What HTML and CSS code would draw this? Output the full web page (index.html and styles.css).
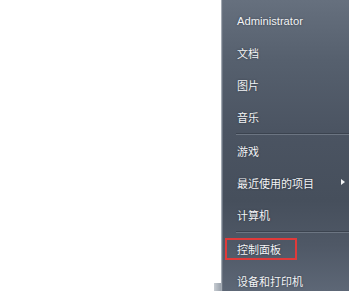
FILE: index.html
```html
<!DOCTYPE html>
<html lang="zh-CN">
<head>
<meta charset="utf-8">
<title>开始菜单</title>
<link rel="stylesheet" href="styles.css">
</head>
<body>
<div class="screen">
  <div class="desk">
    <div class="corner"></div>
  </div>
  <div class="menu">
    <div class="group first">
      <div class="item latin">Administrator</div>
      <div class="item">文档</div>
      <div class="item">图片</div>
      <div class="item">音乐</div>
    </div>
    <div class="sep"></div>
    <div class="group">
      <div class="item">游戏</div>
      <div class="item has-sub"><span>最近使用的项目</span><span class="arrow"></span></div>
      <div class="item">计算机</div>
    </div>
    <div class="sep"></div>
    <div class="group">
      <div class="item"><span class="mark">控制面板</span></div>
      <div class="item">设备和打印机</div>
    </div>
  </div>
</div>
</body>
</html>
```
FILE: styles.css
```css
html, body {
  margin: 0;
  padding: 0;
  background: #ffffff;
}
.screen {
  display: flex;
  width: 349px;
  height: 291px;
  overflow: hidden;
}
.desk {
  width: 221px;
  flex: none;
  display: flex;
  flex-direction: column;
  justify-content: flex-end;
  align-items: flex-end;
}
.corner {
  width: 7px;
  height: 8px;
  background: linear-gradient(90deg, #c7ccd2, #9aa2ac);
}
.menu {
  flex: 1;
  box-sizing: border-box;
  border-left: 1px solid #a3aab3;
  box-shadow: inset 1px 0 0 #6b7481;
  background: linear-gradient(180deg, #66707e 0px, #56606e 60px, #4b5462 130px, #464f5c 200px, #4f5866 245px, #5d6776 291px);
  padding-top: 5px;
  font-family: "Noto Sans CJK SC", "Liberation Sans", sans-serif;
  font-size: 11px;
  color: #f3f4f6;
}
.group {
  display: flex;
  flex-direction: column;
}
.item {
  height: 32px;
  display: flex;
  align-items: center;
  padding-left: 15px;
  padding-right: 4px;
  text-shadow: 0 0 2px rgba(20, 26, 36, 0.6);
  white-space: nowrap;
}
.latin {
  font-family: "Liberation Sans", "Noto Sans CJK SC", sans-serif;
  font-size: 11.2px;
}
.has-sub {
  justify-content: space-between;
}
.arrow {
  width: 0;
  height: 0;
  border-top: 3.5px solid transparent;
  border-bottom: 3.5px solid transparent;
  border-left: 4px solid #f0f2f4;
  margin-top: -2px;
}
.sep {
  height: 1px;
  margin-left: 14px;
  border-top: 1px solid #3b434f;
  background: #6c7582;
}
.mark {
  margin-left: -12px;
  padding: 1px 14px 1px 10px;
  border: 2px solid #e03a3a;
  line-height: 16px;
}
```
